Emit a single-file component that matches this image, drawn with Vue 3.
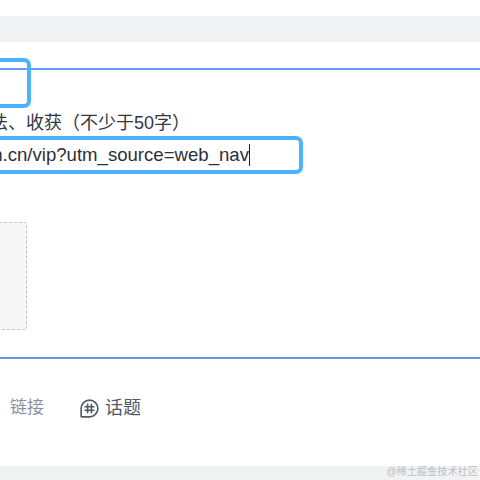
<template>
  <div class="page">
    <div class="band"></div>
    <section class="editor">
      <div class="title-box"></div>
      <div class="label">想法、收获（不少于50字）</div>
      <div class="url-box">
        <span class="url-text">juejin.cn/vip?utm_source=web_nav</span><i class="caret"></i>
      </div>
      <div class="upload"></div>
    </section>
    <div class="toolbar">
      <span class="tool muted">链接</span>
      <span class="tool topic">
        <svg class="topic-icon" viewBox="0 0 20 20" fill="none" stroke="#4e5969" stroke-width="1.7" stroke-linecap="round" stroke-linejoin="round">
          <path d="M1.2 18.2V10a8.8 8.8 0 1 1 8.8 8.8H1.8a.6.6 0 0 1-.6-.6z" />
          <path d="M8 5.6v8.8M12 5.6v8.8M5.4 8.2h9.2M5.4 11.8h9.2" />
        </svg>
        <span>话题</span>
      </span>
    </div>
    <footer class="footer">
      <span class="mark">@稀土掘金技术社区</span>
    </footer>
  </div>
</template>

<script setup>
</script>

<style scoped>
.page {
  width: 480px;
  height: 480px;
  overflow: hidden;
  display: flex;
  flex-direction: column;
  background: #fff;
  font-family: "Liberation Sans", "Noto Sans CJK SC", sans-serif;
}
.band {
  height: 26px;
  margin-top: 16px;
  flex: none;
  background: #f1f2f4;
  border-top: 1px solid #eeeff1;
  box-sizing: border-box;
}
.editor {
  flex: none;
  height: 291px;
  margin-top: 26px;
  box-sizing: border-box;
  border-top: 2px solid #659df6;
  border-bottom: 2px solid #5f94f0;
  display: flex;
  flex-direction: column;
}
.title-box {
  width: 62px;
  height: 50px;
  margin: -12px 0 0 -31px;
  box-sizing: border-box;
  border: 4px solid #4db2fc;
  border-radius: 7px;
  flex: none;
}
.label {
  height: 26px;
  margin-top: 2px;
  margin-left: -28px;
  font-size: 18px;
  line-height: 26px;
  color: #33373f;
  white-space: nowrap;
  flex: none;
}
.url-box {
  flex: none;
  width: 353px;
  height: 38px;
  margin: 0 0 0 -50px;
  box-sizing: border-box;
  border: 4px solid #4db2fc;
  border-radius: 7px;
  display: flex;
  align-items: center;
  justify-content: flex-end;
  padding-right: 49px;
  white-space: nowrap;
  font-size: 18.6px;
  color: #2c3038;
}
.caret {
  width: 1px;
  height: 22px;
  background: #222;
  flex: none;
}
.upload {
  flex: none;
  width: 80px;
  height: 108px;
  margin: 48px 0 0 -53px;
  box-sizing: border-box;
  background: #f7f7f7;
  border: 1px dashed #c4c4c4;
  border-radius: 2px;
}
.toolbar {
  flex: none;
  height: 107px;
  display: flex;
  align-items: flex-start;
  padding: 38px 0 0 10px;
  box-sizing: border-box;
  gap: 36px;
}
.tool {
  line-height: 22px;
  display: flex;
  align-items: center;
  white-space: nowrap;
}
.muted {
  color: #8a919f;
  font-size: 17px;
}
.topic {
  color: #4e5969;
  font-size: 18px;
  gap: 6px;
}
.topic-icon {
  width: 19px;
  height: 19px;
}
.footer {
  flex: 1;
  background: #f1f2f4;
  display: flex;
  justify-content: flex-end;
  align-items: flex-start;
  padding: 0 2px 0 0;
}
.mark {
  font-size: 10.2px;
  line-height: 12px;
  color: #bdbfc2;
}
</style>
